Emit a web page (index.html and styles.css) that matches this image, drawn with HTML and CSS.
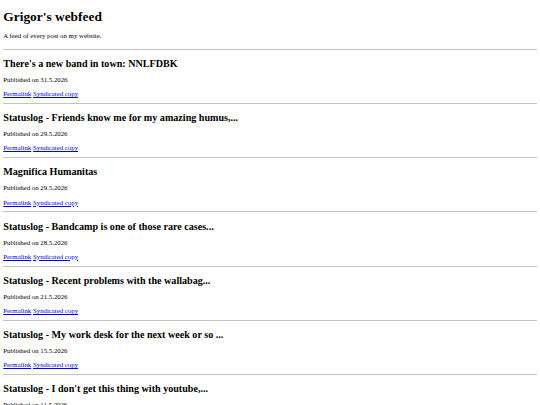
FILE: index.html
```html
<!DOCTYPE html>
<html lang="en">
<head>
    <meta charset="UTF-8">
    <meta name="viewport" content="width=device-width, initial-scale=1.0">
    <title>Grigor's webfeed</title>
    <link rel="stylesheet" href="styles.css">
</head>
<body>
    <h1>Grigor's webfeed</h1>
    <p class="intro">A feed of every post on my website.</p>
    <hr>

    <div class="entry">
        <h2>There's a new band in town: NNLFDBK</h2>
        <p class="meta">Published on 31.5.2026</p>
        <p class="links"><a href="#">Permalink</a> <a href="#">Syndicated copy</a></p>
    </div>
    <hr>
    <div class="entry">
        <h2>Statuslog - Friends know me for my amazing humus,...</h2>
        <p class="meta">Published on 29.5.2026</p>
        <p class="links"><a href="#">Permalink</a> <a href="#">Syndicated copy</a></p>
    </div>
    <hr>
    <div class="entry">
        <h2>Magnifica Humanitas</h2>
        <p class="meta">Published on 29.5.2026</p>
        <p class="links"><a href="#">Permalink</a> <a href="#">Syndicated copy</a></p>
    </div>
    <hr>
    <div class="entry">
        <h2>Statuslog - Bandcamp is one of those rare cases...</h2>
        <p class="meta">Published on 28.5.2026</p>
        <p class="links"><a href="#">Permalink</a> <a href="#">Syndicated copy</a></p>
    </div>
    <hr>
    <div class="entry">
        <h2>Statuslog - Recent problems with the wallabag...</h2>
        <p class="meta">Published on 21.5.2026</p>
        <p class="links"><a href="#">Permalink</a> <a href="#">Syndicated copy</a></p>
    </div>
    <hr>
    <div class="entry">
        <h2>Statuslog - My work desk for the next week or so ...</h2>
        <p class="meta">Published on 15.5.2026</p>
        <p class="links"><a href="#">Permalink</a> <a href="#">Syndicated copy</a></p>
    </div>
    <hr>
    <div class="entry">
        <h2>Statuslog - I don't get this thing with youtube,...</h2>
        <p class="meta">Published on 11.5.2026</p>
        <p class="links"><a href="#">Permalink</a> <a href="#">Syndicated copy</a></p>
    </div>
    <hr>
</body>
</html>
```

FILE: styles.css
```css
/* plain feed page */
body {
    margin: 3.3px;
    font-family: "Liberation Serif", "Times New Roman", serif;
    font-size: 6.8px;
    line-height: 7.8px;
    color: #000;
    background: #fff;
}
h1 {
    font-size: 13.4px;
    line-height: 15.4px;
    margin: 5.5px 0 0;
}
.intro {
    margin: 8.2px 0 8.4px;
}
h2 {
    font-size: 10.1px;
    line-height: 11.6px;
    margin: 8.2px 0 6.4px;
}
.meta {
    margin: 0 0 6.6px;
}
.links {
    margin: 0;
}
a {
    color: #0000ee;
}
hr {
    height: 0;
    margin: 4.9px 0;
    border: none;
    border-top: 1px solid #c4c4c4;
}
```
